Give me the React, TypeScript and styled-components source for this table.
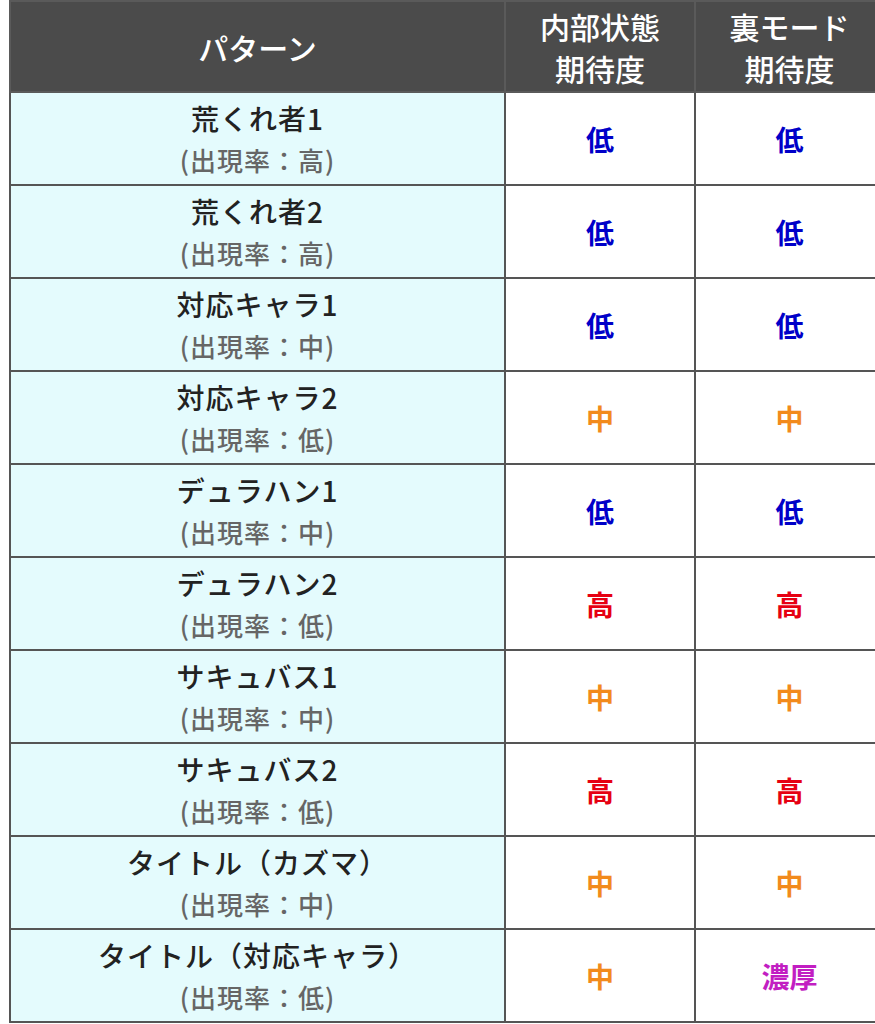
import * as React from "react";
import styled, { createGlobalStyle } from "styled-components";

const GlobalStyle = createGlobalStyle`
  html, body {
    margin: 0;
    padding: 0;
    background: #ffffff;
    overflow: hidden;
  }
  body {
    font-family: "Noto Sans CJK JP", "Noto Sans", sans-serif;
  }
`;

type Level = "low" | "mid" | "high" | "rich";

const levelLabel: Record<Level, string> = {
  low: "低",
  mid: "中",
  high: "高",
  rich: "濃厚",
};

const levelColor: Record<Level, string> = {
  low: "#0000c8",
  mid: "#f28a1c",
  high: "#e60012",
  rich: "#c21ec2",
};

const rows: { name: string; rate: string; inner: Level; ura: Level }[] = [
  { name: "荒くれ者1", rate: "高", inner: "low", ura: "low" },
  { name: "荒くれ者2", rate: "高", inner: "low", ura: "low" },
  { name: "対応キャラ1", rate: "中", inner: "low", ura: "low" },
  { name: "対応キャラ2", rate: "低", inner: "mid", ura: "mid" },
  { name: "デュラハン1", rate: "中", inner: "low", ura: "low" },
  { name: "デュラハン2", rate: "低", inner: "high", ura: "high" },
  { name: "サキュバス1", rate: "中", inner: "mid", ura: "mid" },
  { name: "サキュバス2", rate: "低", inner: "high", ura: "high" },
  { name: "タイトル（カズマ）", rate: "中", inner: "mid", ura: "mid" },
  { name: "タイトル（対応キャラ）", rate: "低", inner: "mid", ura: "rich" },
];

const Table = styled.table`
  margin-left: 9px;
  width: 876px;
  table-layout: fixed;
  border-collapse: collapse;
  border: 2px solid #555555;
`;

const HeadCell = styled.th`
  height: 89px;
  padding: 0;
  background: #4b4b4b;
  border: 2px solid #5a5a5a;
  color: #ffffff;
  font-size: 30px;
  font-weight: 500;
  line-height: 42px;
  text-align: center;
  vertical-align: middle;
`;

const NameCell = styled.td`
  height: 91px;
  padding: 0;
  background: #e4fbfd;
  border: 2px solid #555555;
  text-align: center;
  vertical-align: middle;
`;

const Name = styled.div`
  font-size: 28px;
  font-weight: 500;
  line-height: 42px;
  color: #222222;
  letter-spacing: 1px;
`;

const Rate = styled.div`
  font-size: 26px;
  font-weight: 500;
  line-height: 42px;
  color: #666666;
  letter-spacing: 1px;
`;

const ValueCell = styled.td<{ $level: Level }>`
  height: 91px;
  padding: 0;
  background: #ffffff;
  border: 2px solid #555555;
  color: ${(p) => levelColor[p.$level]};
  font-size: 28px;
  font-weight: 700;
  text-align: center;
  vertical-align: middle;
`;

export default function App() {
  return (
    <>
      <GlobalStyle />
      <Table>
        <colgroup>
          <col style={{ width: 495 }} />
          <col style={{ width: 190 }} />
          <col />
        </colgroup>
        <thead>
          <tr>
            <HeadCell>パターン</HeadCell>
            <HeadCell>
              内部状態
              <br />
              期待度
            </HeadCell>
            <HeadCell>
              裏モード
              <br />
              期待度
            </HeadCell>
          </tr>
        </thead>
        <tbody>
          {rows.map((r) => (
            <tr key={r.name}>
              <NameCell>
                <Name>{r.name}</Name>
                <Rate>(出現率：{r.rate})</Rate>
              </NameCell>
              <ValueCell $level={r.inner}>{levelLabel[r.inner]}</ValueCell>
              <ValueCell $level={r.ura}>{levelLabel[r.ura]}</ValueCell>
            </tr>
          ))}
        </tbody>
      </Table>
    </>
  );
}
